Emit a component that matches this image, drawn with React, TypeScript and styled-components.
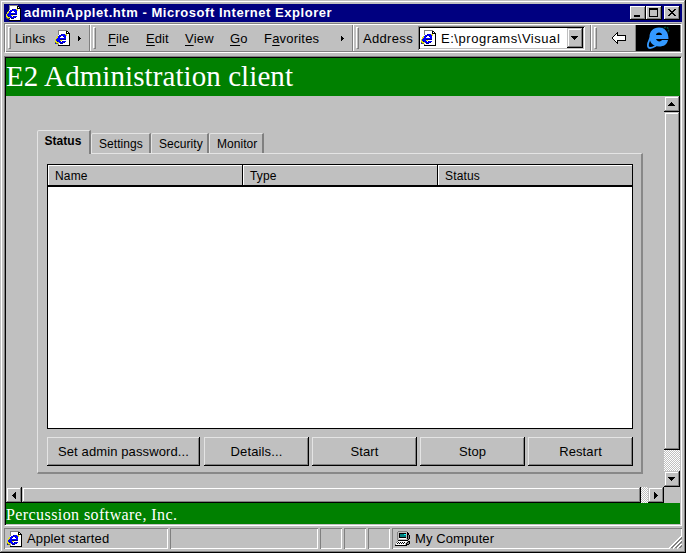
import React from "react";
import styled, { createGlobalStyle, css } from "styled-components";

const face = "#c0c0c0";
const shade = "#808080";
const soft = "#e4e4e4";
const green = "#008000";

const GlobalStyle = createGlobalStyle`
  * { box-sizing: border-box; }
  body { margin: 0; background: ${face}; overflow: hidden; }
`;

const Window = styled.div`
  width: 686px;
  height: 553px;
  padding: 4px;
  display: flex;
  flex-direction: column;
  background: ${face};
  color: #000;
  font: 13px/16px "Liberation Sans", Arial, sans-serif;
  white-space: nowrap;
  cursor: default;
  box-shadow: inset -1px -1px #000, inset 1px 1px ${face},
    inset -2px -2px ${shade}, inset 2px 2px #fff;
`;

const TitleBar = styled.header`
  height: 18px;
  flex: none;
  display: flex;
  align-items: center;
  padding: 0 2px;
  background: #000080;
`;

const TitleText = styled.h1`
  flex: 1;
  margin: 0 0 0 2px;
  font-size: 13px;
  line-height: 18px;
  letter-spacing: 0.54px;
  color: #fff;
`;

const raised = css`
  background: ${face};
  box-shadow: inset -1px -1px #000, inset 1px 1px #fff, inset -2px -2px ${shade};
`;

const raisedSoft = css`
  background: ${face};
  box-shadow: inset -1px -1px #000, inset 1px 1px ${face},
    inset -2px -2px ${shade}, inset 2px 2px #fff;
`;

const CaptionButton = styled.button<{ $gap?: number }>`
  ${raised}
  width: 16px;
  height: 14px;
  padding: 0;
  border: 0;
  margin-left: ${(p) => p.$gap ?? 0}px;
  display: flex;
`;

const Rebar = styled.nav`
  height: 30px;
  flex: none;
  margin-top: 1px;
  display: flex;
  border: 1px solid ${shade};
  border-right-color: #fff;
  border-bottom-color: #fff;
  box-shadow: inset 1px 1px #fff, inset -1px -1px ${shade};
  padding: 1px;
`;

const Band = styled.div<{ $width: number }>`
  width: ${(p) => p.$width}px;
  height: 26px;
  flex: none;
  display: flex;
  align-items: center;
  border-right: 1px solid ${shade};
  box-shadow: 1px 0 #fff;
`;

const Gripper = styled.span<{ $left: number }>`
  width: 3px;
  height: 22px;
  flex: none;
  margin-left: ${(p) => p.$left}px;
  border: 1px solid #fff;
  border-right-color: ${shade};
  border-bottom-color: ${shade};
`;

const Label = styled.span<{ $left: number; $width: number; $track?: number }>`
  width: ${(p) => p.$width}px;
  flex: none;
  margin-left: ${(p) => p.$left}px;
  padding-top: 1px;
  letter-spacing: ${(p) => p.$track ?? 0}px;
  u { text-underline-offset: 2px; text-decoration-thickness: 1px; }
`;

const Chevron = styled.svg<{ $left: number }>`
  width: 3px;
  height: 5px;
  flex: none;
  margin-left: ${(p) => p.$left}px;
`;

const Combo = styled.div`
  width: 167px;
  height: 24px;
  flex: none;
  display: flex;
  align-items: center;
  margin-left: 3px;
  padding: 2px 2px 2px 3px;
  background: #fff;
  box-shadow: inset 1px 1px ${shade}, inset -1px -1px #fff, inset 2px 2px #000,
    inset -2px -2px ${face};
`;

const ComboButton = styled.button`
  ${raisedSoft}
  width: 16px;
  height: 20px;
  padding: 0;
  border: 0;
  margin-left: auto;
  display: flex;
`;

const Brand = styled.div`
  width: 44px;
  height: 26px;
  margin-left: auto;
  display: flex;
  background: #000;
`;

const Content = styled.main`
  height: 470px;
  flex: none;
  margin-top: 3px;
  display: flex;
  flex-direction: column;
  border: 1px solid;
  border-color: ${shade} #fff #fff ${shade};
  box-shadow: inset 1px 1px #000, inset -1px -1px ${face};
  padding: 1px;
`;

const Banner = styled.h2`
  height: 38px;
  margin: 0;
  flex: none;
  background: ${green};
  color: #fff;
  font: 29px/36px "Liberation Serif", "Times New Roman", serif;
  letter-spacing: 0.08px;
`;

const Footer = styled.div`
  height: 21px;
  flex: none;
  background: ${green};
  color: #fff;
  font: 16px/23px "Liberation Serif", "Times New Roman", serif;
  letter-spacing: 0.42px;
`;

const ScrollFrame = styled.div`
  height: 407px;
  display: grid;
  grid-template: 391px 16px / 658px 16px;
`;

const Applet = styled.section`
  padding: 34px 21px 13px 31px;
  display: flex;
  flex-direction: column;
`;

const Tabs = styled.div`
  height: 23px;
  flex: none;
  display: flex;
  align-items: flex-end;
`;

const Tab = styled.div<{ $width: number; $active?: boolean }>`
  width: ${(p) => p.$width}px;
  height: ${(p) => (p.$active ? 24 : 20)}px;
  flex: none;
  padding: 2px 0 0 ${(p) => (p.$active ? 6.5 : 7)}px;
  font-size: 12px;
  font-weight: ${(p) => (p.$active ? "bold" : "normal")};
  letter-spacing: 0.05px;
  background: ${face};
  border-style: solid;
  border-color: ${soft} ${shade} transparent ${soft};
  border-width: 1px 2px 0 1px;
  border-top-left-radius: 2px;
  margin-bottom: ${(p) => (p.$active ? -1 : 0)}px;
  z-index: ${(p) => (p.$active ? 1 : 0)};
`;

const Panel = styled.div`
  width: 606px;
  height: 321px;
  padding: 10px 8px 6px 9px;
  border-style: solid;
  border-width: 1px 2px 2px 1px;
  border-color: ${soft} #888 #888 ${soft};
`;

const Table = styled.div`
  width: 586px;
  height: 265px;
  border: 1px solid #000;
  background: #fff;
`;

const HeaderRow = styled.div`
  height: 22px;
  display: grid;
  grid-template-columns: repeat(3, 194px);
  column-gap: 1px;
  background: #000;
  padding-bottom: 2px;
`;

const HeaderCell = styled.div`
  padding: 3px 0 0 7px;
  font-size: 12px;
  line-height: 16px;
  letter-spacing: 0.15px;
  background: ${face};
  box-shadow: inset 1px 1px #fff;
`;

const Actions = styled.div`
  display: flex;
  gap: 3px;
  margin-top: 8px;
`;

const Action = styled.button<{ $wide?: boolean }>`
  width: ${(p) => (p.$wide ? 153 : 105)}px;
  height: 29px;
  flex: none;
  margin-right: ${(p) => (p.$wide ? 1 : 0)}px;
  padding: 0;
  border: 0;
  font: 13px/27px "Liberation Sans", Arial, sans-serif;
  letter-spacing: 0.12px;
  background: ${face};
  box-shadow: inset -1px -1px #000, inset 1px 1px ${soft}, inset -2px -2px ${shade};
`;

const ScrollBar = styled.div<{ $horizontal?: boolean }>`
  display: flex;
  flex-direction: ${(p) => (p.$horizontal ? "row" : "column")};
  background: repeating-conic-gradient(${face} 0 25%, #fff 0 50%) 0 0 / 2px 2px;
`;

const ScrollButton = styled.button<{ $end?: boolean; $horizontal?: boolean }>`
  ${raisedSoft}
  width: 16px;
  height: 16px;
  flex: none;
  padding: 0;
  border: 0;
  display: flex;
  margin-top: ${(p) => (p.$end && !p.$horizontal ? "auto" : 0)};
  margin-left: ${(p) => (p.$end && p.$horizontal ? "auto" : 0)};
`;

const Thumb = styled.div<{ $width: number; $height: number }>`
  ${raisedSoft}
  width: ${(p) => p.$width}px;
  height: ${(p) => p.$height}px;
`;

const StatusBar = styled.footer`
  height: 21px;
  margin-top: 2px;
  display: flex;
  gap: 2px;
`;

const StatusPane = styled.div<{ $width: number }>`
  width: ${(p) => p.$width}px;
  display: flex;
  align-items: center;
  padding-left: 3px;
  box-shadow: inset 1px 1px ${shade}, inset -1px -1px #fff;
`;

const Grip = styled.svg`
  width: 13px;
  height: 13px;
  margin: auto 0 0 auto;
`;

const Sprite = styled.svg<{ $left?: number }>`
  flex: none;
  margin-left: ${(p) => p.$left ?? 0}px;
`;

const palette: Record<string, string> = {
  k: "#000",
  w: "#fff",
  g: "#808080",
  s: "#c0c0c0",
  b: "#0000ff",
  n: "#000080",
  y: "#e0e020",
  o: "#808000",
  t: "#008080",
  c: "#00ffff",
};

const pageRows = [
  "...ggggggggg....",
  "...gwwwwwwwkk...",
  "...gwwwwwwwkwk..",
  "...gwwwwwwwkkkk.",
  "...gwwnbbbyywwk.",
  "...wbbbbbbbywwk.",
  "..ybbnwwnbbwwwk.",
  ".yybbwwwwbbwwwk.",
  ".ybbbbbbbbbwwwk.",
  "ybbbbnnnnnnwwwk.",
  "ybbbbyywwwwwwwk.",
  "yynbbbwnbbbwwwk.",
  "oyyybbbbbnwwwwk.",
  "boo.wnnnwwwwwwk.",
  "...gwwwwwwwwwwk.",
  "...kkkkkkkkkkkk.",
];

const computerRows = [
  "...ggggggggg....",
  "..gsssssssssk...",
  "..gskkkkkkkskk..",
  "..gskttttccskk..",
  "..gskttttttskgk.",
  "..gskttttttskgk.",
  "..gskkkkkkkskgk.",
  "..gswwwwwwwskgk.",
  "..gsssssssssgk..",
  "...kkkkkkkkkk...",
  "..gwwwwwwwwwskk.",
  ".gwkwkwkwkwskgk.",
  ".wkwkwkwkwskggk.",
  "gwwwwwwwwwskkk..",
  "kkkkkkkkkkkk....",
];

function PixelArt({ rows, left }: { rows: string[]; left?: number }) {
  return (
    <Sprite $left={left} width={16} height={rows.length} shapeRendering="crispEdges">
      {rows.flatMap((row, y) =>
        [...row].map((c, x) =>
          palette[c] ? <rect key={`${x}-${y}`} x={x} y={y} width={1} height={1} fill={palette[c]} /> : null
        )
      )}
    </Sprite>
  );
}

function Glyph({ d, width = 16, height = 16 }: { d: string; width?: number; height?: number }) {
  return (
    <svg width={width} height={height} shapeRendering="crispEdges">
      <path d={d} fill="#000" />
    </svg>
  );
}

const RightChevron = ({ left }: { left: number }) => (
  <Chevron $left={left} shapeRendering="crispEdges">
    <path d="M0 0h1v1h1v1h1v1h-1v1h-1v1h-1z" />
  </Chevron>
);

export default function App() {
  return (
    <>
      <GlobalStyle />
      <Window>
        <TitleBar>
          <PixelArt rows={pageRows} />
          <TitleText>adminApplet.htm - Microsoft Internet Explorer</TitleText>
          <CaptionButton aria-label="Minimize">
            <Glyph height={14} d="M4 9h6v2h-6z" />
          </CaptionButton>
          <CaptionButton aria-label="Maximize">
            <Glyph height={14} d="M3 2h9v9h-9zM4 4v6h7v-6z" />
          </CaptionButton>
          <CaptionButton aria-label="Close" $gap={2}>
            <Glyph
              height={14}
              d="M4 3h2v1h1v1h2v-1h1v-1h2v1h-1v1h-1v1h-1v1h1v1h1v1h1v1h-2v-1h-1v-1h-2v1h-1v1h-2v-1h1v-1h1v-1h1v-1h-1v-1h-1v-1h-1z"
            />
          </CaptionButton>
        </TitleBar>

        <Rebar>
          <Band $width={84}>
            <Gripper $left={2} />
            <Label $left={4} $width={40}>Links</Label>
            <PixelArt rows={pageRows} />
            <RightChevron left={7} />
          </Band>
          <Band $width={263}>
            <Gripper $left={3} />
            <Label $left={12} $width={38} $track={0.1}><u>F</u>ile</Label>
            <Label $left={0} $width={39} $track={0.1}><u>E</u>dit</Label>
            <Label $left={0} $width={45} $track={0.2}><u>V</u>iew</Label>
            <Label $left={0} $width={34}><u>G</u>o</Label>
            <Label $left={0} $width={55} $track={0.2}>F<u>a</u>vorites</Label>
            <RightChevron left={22} />
          </Band>
          <Band $width={238}>
            <Gripper $left={3} />
            <Label $left={4} $width={52} $track={0.33}>Address</Label>
            <Combo>
              <PixelArt rows={pageRows} />
              <Label $left={4} $width={122} $track={0.54}>E:\programs\Visual</Label>
              <ComboButton aria-label="Open address list">
                <Glyph height={20} d="M4 8h7v1h-1v1h-1v1h-1v1h-1v-1h-1v-1h-1v-1h-1z" />
              </ComboButton>
            </Combo>
          </Band>
          <Band $width={45}>
            <Gripper $left={3} />
            <Sprite $left={14} width={16} height={14} shapeRendering="crispEdges">
              <path
                d="M6.500 1.500v3h8v5h-8v3l-5.500-5.500z"
                fill="#fff"
                stroke="#000"
              />
            </Sprite>
          </Band>
          <Brand>
            <svg width="44" height="26" viewBox="0 0 44 26">
              <path d="M17 9c-5 6-7 14-3 14 3 0 5-2 7-3" fill="none" stroke="#3399ff" strokeWidth="1.800" />
              <path d="M25 4c5-3 9-2 7 4" fill="none" stroke="#00503c" strokeWidth="1.500" strokeDasharray="2 1" />
              <path
                fill="#3399ff"
                fillRule="evenodd"
                d="M23 2.500c-6 0-9.500 4-9.500 9.500 0 6 4 9.500 9.500 9.500 5 0 8-2 9-6.500h-6c-1 2-5 2-6-1h12.500c0-7-3.500-11.500-9.500-11.500zM20 10c0-3.500 6-3.500 6 0z"
              />
            </svg>
          </Brand>
        </Rebar>

        <Content>
          <Banner>E2 Administration client</Banner>
          <ScrollFrame>
            <Applet>
              <Tabs>
                <Tab $width={54} $active>Status</Tab>
                <Tab $width={60}>Settings</Tab>
                <Tab $width={58}>Security</Tab>
                <Tab $width={55}>Monitor</Tab>
              </Tabs>
              <Panel>
                <Table>
                  <HeaderRow>
                    <HeaderCell>Name</HeaderCell>
                    <HeaderCell>Type</HeaderCell>
                    <HeaderCell>Status</HeaderCell>
                  </HeaderRow>
                </Table>
                <Actions>
                  <Action $wide>Set admin password...</Action>
                  <Action>Details...</Action>
                  <Action>Start</Action>
                  <Action>Stop</Action>
                  <Action>Restart</Action>
                </Actions>
              </Panel>
            </Applet>
            <ScrollBar>
              <ScrollButton aria-label="Scroll up">
                <Glyph d="M7 6h1v1h1v1h1v1h1v1h-7v-1h1v-1h1v-1h1z" />
              </ScrollButton>
              <Thumb $width={16} $height={338} />
              <ScrollButton aria-label="Scroll down" $end>
                <Glyph d="M4 6h7v1h-1v1h-1v1h-1v1h-1v-1h-1v-1h-1v-1h-1z" />
              </ScrollButton>
            </ScrollBar>
            <ScrollBar $horizontal>
              <ScrollButton aria-label="Scroll left" $horizontal>
                <Glyph d="M9 5h1v7h-1v-1h-1v-1h-1v-1h-1v-1h1v-1h1v-1h1z" />
              </ScrollButton>
              <Thumb $width={619} $height={16} />
              <ScrollButton aria-label="Scroll right" $end $horizontal>
                <Glyph d="M6 5h1v1h1v1h1v1h1v1h-1v1h-1v1h-1v1h-1z" />
              </ScrollButton>
            </ScrollBar>
          </ScrollFrame>
          <Footer>Percussion software, Inc.</Footer>
        </Content>

        <StatusBar>
          <StatusPane $width={164}>
            <PixelArt rows={pageRows} />
            <Label $left={4} $width={100} $track={0.15}>Applet started</Label>
          </StatusPane>
          <StatusPane $width={148} />
          <StatusPane $width={22} />
          <StatusPane $width={22} />
          <StatusPane $width={22} />
          <StatusPane $width={290}>
            <PixelArt rows={computerRows} />
            <Label $left={4} $width={100} $track={0.1}>My Computer</Label>
            <Grip viewBox="0 0 13 13" shapeRendering="crispEdges">
              <path d="M0 13L13 0v13z" fill={face} />
              <path d="M0 12.500L12.500 0M4 12.500L12.500 4M8 12.500L12.500 8" stroke="#fff" />
              <path d="M1.500 12.500L12.500 1.500M2.500 12.500L12.500 2.500M5.500 12.500L12.500 5.500M6.500 12.500L12.500 6.500M9.500 12.500L12.500 9.500M10.500 12.500L12.500 10.500" stroke={shade} />
            </Grip>
          </StatusPane>
        </StatusBar>
      </Window>
    </>
  );
}
